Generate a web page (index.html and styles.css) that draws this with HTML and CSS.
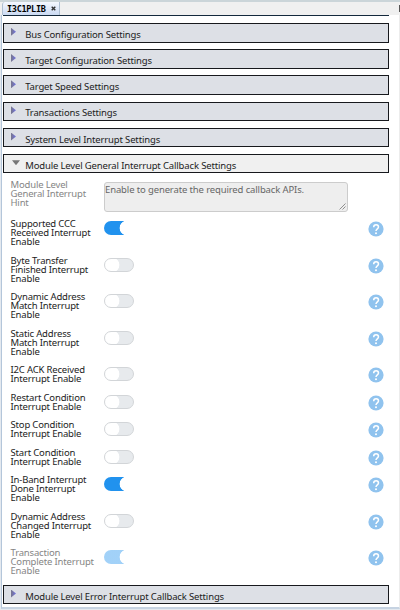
FILE: index.html
```html
<!DOCTYPE html>
<html lang="en">
<head>
<meta charset="utf-8">
<title>I3C1PLIB</title>
<link rel="stylesheet" href="styles.css">
</head>
<body>
<svg width="0" height="0" class="defs"><defs>
<symbol id="help" viewBox="0 0 16 16"><circle cx="8" cy="8" r="7.6" fill="#90c3ee"/><path d="M5.7 6.2C5.7 2.8 10.5 3 10.5 6C10.5 7.8 8 8 8 10.1" fill="none" stroke="#fff" stroke-width="1.5"/><circle cx="8" cy="12.3" r="1" fill="#fff"/></symbol>
</defs></svg>
<header class="tabs"><div class="tab"><span>I3C1PLIB</span><svg class="close" viewBox="0 0 5 5"><path d="M.7.7 4.3 4.3M4.3.7.7 4.3"/></svg></div><em></em></header>
<main class="panel">
<section class="sections">
<div class="bar"><i></i><span>Bus Configuration Settings</span></div>
<div class="bar"><i></i><span>Target Configuration Settings</span></div>
<div class="bar"><i></i><span>Target Speed Settings</span></div>
<div class="bar"><i></i><span>Transactions Settings</span></div>
<div class="bar"><i></i><span>System Level Interrupt Settings</span></div>
<div class="bar open"><i></i><span>Module Level General Interrupt Callback Settings</span></div>
</section>
<section class="fields">
<div class="row hint off"><label>Module Level<br>General Interrupt<br>Hint</label><div class="area">Enable to generate the required callback APIs.<svg viewBox="0 0 7 7"><path d="M.5 6.5 6.5.5M3.5 6.5 6.5 3.5"/></svg></div></div>
<div class="row"><label>Supported CCC<br>Received Interrupt<br>Enable</label><b class="toggle on"></b><svg class="help"><use href="#help"/></svg></div>
<div class="row"><label>Byte Transfer<br>Finished Interrupt<br>Enable</label><b class="toggle"></b><svg class="help"><use href="#help"/></svg></div>
<div class="row"><label>Dynamic Address<br>Match Interrupt<br>Enable</label><b class="toggle"></b><svg class="help"><use href="#help"/></svg></div>
<div class="row"><label>Static Address<br>Match Interrupt<br>Enable</label><b class="toggle"></b><svg class="help"><use href="#help"/></svg></div>
<div class="row"><label>I2C ACK Received<br>Interrupt Enable</label><b class="toggle"></b><svg class="help"><use href="#help"/></svg></div>
<div class="row"><label>Restart Condition<br>Interrupt Enable</label><b class="toggle"></b><svg class="help"><use href="#help"/></svg></div>
<div class="row"><label>Stop Condition<br>Interrupt Enable</label><b class="toggle"></b><svg class="help"><use href="#help"/></svg></div>
<div class="row"><label>Start Condition<br>Interrupt Enable</label><b class="toggle"></b><svg class="help"><use href="#help"/></svg></div>
<div class="row"><label>In-Band Interrupt<br>Done Interrupt<br>Enable</label><b class="toggle on"></b><svg class="help"><use href="#help"/></svg></div>
<div class="row"><label>Dynamic Address<br>Changed Interrupt<br>Enable</label><b class="toggle"></b><svg class="help"><use href="#help"/></svg></div>
<div class="row off"><label>Transaction<br>Complete Interrupt<br>Enable</label><b class="toggle on"></b><svg class="help"><use href="#help"/></svg></div>
</section>
<div class="bar last"><i></i><span>Module Level Error Interrupt Callback Settings</span></div>
</main>
</body>
</html>
```
FILE: styles.css
```css
* { box-sizing: border-box; }
body {
  margin: 0;
  width: 400px;
  height: 610px;
  overflow: hidden;
  background: #e4e9ef;
  color: #1c1c1c;
  font: 9.5px/9px "Noto Sans", sans-serif;
  letter-spacing: -.17px;
}
.defs { position: absolute; }
.tabs {
  display: flex;
  justify-content: space-between;
  height: 15px;
  padding-left: 2px;
  background: #f0f0f0;
  border-top: 2px solid #cbd5d9;
}
.tabs em { width: 1px; height: 7px; margin-top: 3px; background: #555; }
.tab {
  display: flex;
  align-items: center;
  width: 58px;
  height: 13px;
  padding-left: 4px;
  background: linear-gradient(#f5f8ff, #cbdaf2);
  border: 1px solid #aebfd2;
  border-width: 0 1px;
  border-radius: 3px 0 0 0;
  color: #000;
  font: bold 8.5px/12px "DejaVu Sans Mono", monospace;
  letter-spacing: -.3px;
}
.tab span { width: 43.5px; white-space: nowrap; }
.close { width: 5px; height: 5px; fill: none; stroke: #333; stroke-width: 1.4; }
.panel {
  height: 594px;
  margin-left: 1px;
  width: 399px;
  padding-left: 1px;
  border-left: 1px solid #b4c6da;
  border-right: 1px solid #ececec;
  border-bottom: 2px solid #c6d3e2;
  background: #fff;
}
.sections {
  display: flex;
  flex-direction: column;
  gap: 6.7px;
  width: 386px;
  padding-top: 7px;
  border-top: 1px solid #14293c;
}
.bar {
  display: flex;
  align-items: center;
  width: 386px;
  height: 19.5px;
  padding: 3px 0 0 7px;
  background: #dde0e6;
  border: 1px solid #17191d;
  font-size: 9.5px;
  letter-spacing: -.15px;
  white-space: nowrap;
}
.bar i {
  width: 5px;
  height: 8px;
  margin: -5px 9.2px 0 0;
  background: linear-gradient(90deg, #77778b, #7272e3);
  clip-path: polygon(0 0, 100% 50%, 0 100%);
}
.bar.open { background: #f0f0f0; }
.bar.open i {
  width: 8px;
  height: 5px;
  margin-left: 1px;
  margin-right: 5.2px;
  background: #777;
  clip-path: polygon(0 0, 100% 0, 50% 100%);
}
.fields {
  display: flex;
  flex-direction: column;
  gap: 9.5px;
  padding: 6.9px 0 0 7.5px;
}
.row { display: flex; }
.row label { width: 93.5px; white-space: nowrap; }
.row.hint { height: 29.3px; }
.off label { color: #858585; }
.area {
  position: relative;
  width: 244px;
  height: 30px;
  margin-top: 1.5px;
  padding: 2.5px 0 0 0;
  border: 1px solid #ccc;
  border-radius: 3px;
  background: #eee;
  color: #666;
  letter-spacing: -.13px;
  white-space: nowrap;
}
.area svg {
  position: absolute;
  right: 1px;
  bottom: 1px;
  width: 7px;
  height: 7px;
  fill: none;
  stroke: #777;
  stroke-width: .8;
}
.toggle {
  width: 30px;
  height: 14px;
  margin-top: 2px;
  border: 1px solid #d2d5d8;
  border-radius: 7px;
  background: radial-gradient(circle at 7px 6px, #fff 7px, #e7eaed 7.7px);
}
.toggle.on {
  width: 20px;
  margin-right: 10px;
  border: 0;
  border-radius: 7px 0 0 7px;
  background: radial-gradient(circle at 23px 7px, #fff 7px, #2192ee 7.7px);
}
.off .toggle { opacity: .42; }
.help { width: 16px; height: 16px; margin: 2px 0 0 234px; }
.last { margin-top: 9.7px; }
```
